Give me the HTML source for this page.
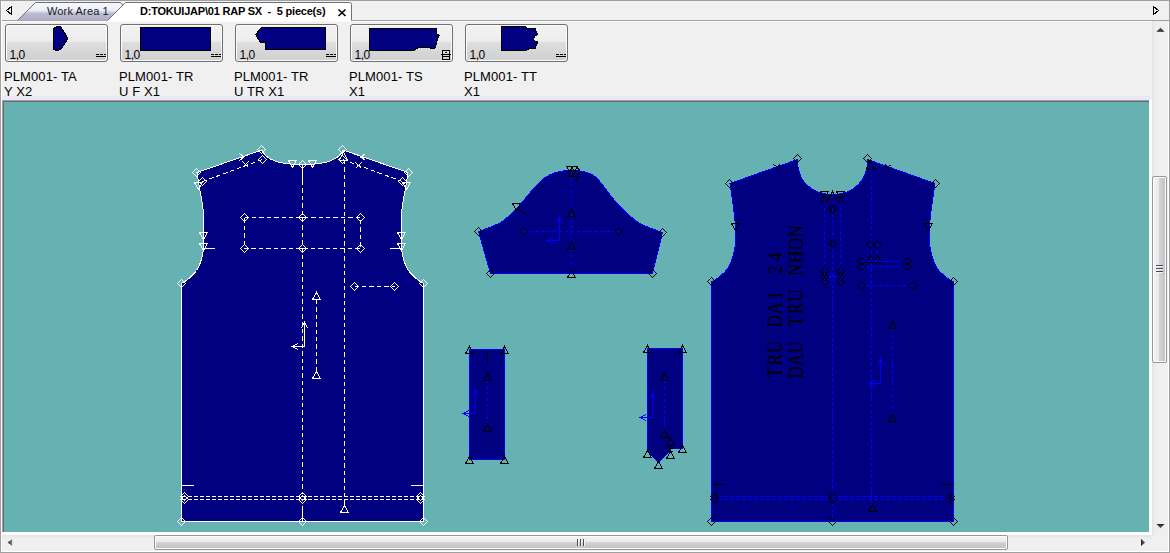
<!DOCTYPE html>
<html>
<head>
<meta charset="utf-8">
<title>Work Area</title>
<style>
html,body{margin:0;padding:0;}
body{width:1170px;height:553px;position:relative;overflow:hidden;background:#f0f0f0;font-family:"Liberation Sans",sans-serif;color:#000;}
.abs{position:absolute;}
/* outer frame */
#frameT{left:0;top:0;width:1170px;height:1px;background:#a0a0a0;}
#frameL{left:0;top:0;width:1px;height:553px;background:#a0a0a0;}
#frameL2{left:1px;top:1px;width:1px;height:551px;background:#fff;}
#frameR{left:1169px;top:0;width:1px;height:553px;background:#a0a0a0;}
#frameR2{left:1168px;top:21px;width:1px;height:531px;background:#fff;}
#frameB{left:0;top:552px;width:1170px;height:1px;background:#a0a0a0;}
#frameB2{left:1px;top:551px;width:1168px;height:1px;background:#fff;}
/* tab strip */
#tabline{left:1px;top:20px;width:1168px;height:1px;background:#a0a0a0;}
#tabline2{left:2px;top:21px;width:1166px;height:1px;background:#fafafa;}
.tabtxt{position:absolute;font-size:11px;line-height:13px;white-space:nowrap;}
#t1{left:47px;top:5px;color:#1a1a1a;letter-spacing:0.14px;}
#t2{left:140px;top:5px;font-weight:bold;letter-spacing:-0.21px;}
/* piece buttons */
.btn{position:absolute;top:24px;width:101px;height:36px;border:1px solid #707070;border-radius:3px;
 background:linear-gradient(#f3f3f3 0%,#ececec 47%,#dedede 48%,#cfcfcf 100%);box-shadow:inset 0 0 0 1px #fbfbfb;}
.scale{position:absolute;font-size:12px;line-height:12px;top:49px;letter-spacing:-0.5px;margin-left:0.5px;}
.lbl{position:absolute;top:69px;letter-spacing:0.1px;font-size:13px;line-height:15px;white-space:pre;}
/* canvas */
#lav{left:2px;top:96px;width:1149px;height:4px;background:#e9e9f8;}
#cvT1{left:2px;top:100px;width:1147px;height:1px;background:#a0a0a0;}
#cvT2{left:3px;top:101px;width:1146px;height:1px;background:#696969;}
#cvL1{left:2px;top:100px;width:1px;height:432px;background:#a0a0a0;}
#cvL2{left:3px;top:101px;width:1px;height:431px;background:#696969;}
#canvas{left:4px;top:102px;width:1145px;height:430px;background:#66b2b2;}
#cvR{left:1149px;top:100px;width:3px;height:435px;background:#fff;}
#cvB{left:2px;top:532px;width:1149px;height:3px;background:#fff;}
/* scrollbars */
#vsb{left:1152px;top:21px;width:16px;height:514px;background:linear-gradient(90deg,#e3e3e3 0,#ededed 3px,#f0f0f0 9px,#f0f0f0 100%);}
#vth{left:1152px;top:176px;width:13px;height:185px;border:1px solid #979797;border-radius:2px;
 background:linear-gradient(90deg,#f5f5f5 0%,#e9e9eb 47%,#d5d5d8 48%,#bfbfc4 100%);box-shadow:inset 0 0 0 1px #fcfcfc;}
#hsb{left:2px;top:535px;width:1149px;height:16px;background:linear-gradient(#e3e3e3 0,#ededed 3px,#f0f0f0 9px,#f0f0f0 100%);}
#hth{left:154px;top:535px;width:852px;height:13px;border:1px solid #979797;border-radius:2px;
 background:linear-gradient(#f5f5f5 0%,#e9e9eb 47%,#d5d5d8 48%,#bfbfc4 100%);box-shadow:inset 0 0 0 1px #fcfcfc;}
svg{position:absolute;left:0;top:0;}
</style>
</head>
<body>
<div class="abs" id="tabline"></div>
<div class="abs" id="tabline2"></div>

<!-- tab strip graphics -->
<svg width="1170" height="24" viewBox="0 0 1170 24">
 <defs>
  <linearGradient id="tabg" x1="0" y1="0" x2="0" y2="1">
   <stop offset="0" stop-color="#f6f7fd"/><stop offset="0.42" stop-color="#eef0fa"/>
   <stop offset="0.62" stop-color="#b9bbd2"/><stop offset="1" stop-color="#adadc6"/>
  </linearGradient>
 </defs>
 <!-- inactive tab -->
 <path d="M17.5 20.5 L35.5 2.5 L120.5 2.5 L123 5.5 L107.5 20.5 Z" fill="url(#tabg)" stroke="none"/>
 <path d="M17.5 20.5 L35.5 2.5 L120.5 2.5 L123 5.5" fill="none" stroke="#707070" stroke-width="1"/>
 <!-- active tab -->
 <path d="M107 21 L125.5 2.5 L349.5 2.5 Q351.5 2.5 351.5 4.5 L351.5 21 Z" fill="#ffffff" stroke="none"/>
 <path d="M107.5 20.5 L125.5 2.5 L349.5 2.5 Q351.5 2.5 351.5 4.5 L351.5 20.5" fill="none" stroke="#707070" stroke-width="1"/>
 <!-- left / right scroll arrows -->
 <path d="M11.5 6.5 L6.5 10.5 L11.5 14.5 Z" fill="none" stroke="#000" stroke-width="1" shape-rendering="crispEdges"/>
 <path d="M1153.5 6.5 L1158.5 10.5 L1153.5 14.5 Z" fill="none" stroke="#000" stroke-width="1" shape-rendering="crispEdges"/>
 <!-- close x -->
 <path d="M338.5 9.5 L345.5 16 M345.5 9.5 L338.5 16" fill="none" stroke="#000" stroke-width="1.6"/>
</svg>
<div class="tabtxt" id="t1">Work Area 1</div>
<div class="tabtxt" id="t2">D:TOKUIJAP\01 RAP SX&nbsp; -&nbsp; 5 piece(s)</div>

<!-- piece buttons -->
<div class="btn" style="left:5px"></div>
<div class="btn" style="left:120px"></div>
<div class="btn" style="left:235px"></div>
<div class="btn" style="left:350px"></div>
<div class="btn" style="left:465px"></div>
<div class="scale" style="left:9px">1,0</div>
<div class="scale" style="left:124px">1,0</div>
<div class="scale" style="left:239px">1,0</div>
<div class="scale" style="left:354px">1,0</div>
<div class="scale" style="left:469px">1,0</div>
<div class="lbl" style="left:4px">PLM001- TA
Y X2</div>
<div class="lbl" style="left:119px">PLM001- TR
U F X1</div>
<div class="lbl" style="left:234px">PLM001- TR
U TR X1</div>
<div class="lbl" style="left:349px">PLM001- TS
X1</div>
<div class="lbl" style="left:464px">PLM001- TT
X1</div>

<!-- canvas -->
<div class="abs" id="lav"></div>
<div class="abs" id="cvR"></div>
<div class="abs" id="cvB"></div>
<div class="abs" id="canvas"></div>
<div class="abs" id="cvT1"></div>
<div class="abs" id="cvT2"></div>
<div class="abs" id="cvL1"></div>
<div class="abs" id="cvL2"></div>

<!-- scrollbars -->
<div class="abs" id="vsb"></div>
<div class="abs" id="vth"></div>
<div class="abs" id="hsb"></div>
<div class="abs" id="hth"></div>

<!-- frame -->
<div class="abs" id="frameT"></div>
<div class="abs" id="frameL"></div>
<div class="abs" id="frameL2"></div>
<div class="abs" id="frameR"></div>
<div class="abs" id="frameR2"></div>
<div class="abs" id="frameB2"></div>
<div class="abs" id="frameB"></div>

<!-- thumbnails, button glyphs, scrollbar glyphs -->
<svg width="1170" height="553" viewBox="0 0 1170 553" shape-rendering="crispEdges" fill="none" stroke-width="1">
 <g fill="#000080" stroke="#000">
  <path d="M53.5 28.5L57.5 26.5L60.5 26.5L67.5 37.5L67.5 39.5L60.5 49.5L57.5 50.5L53.5 49.5Z"/>
  <path d="M140.5 27.5L210.5 27.5L210.5 50.5L140.5 50.5Z"/>
  <path d="M261.5 27.5L325.5 27.5L325.5 49.5L265.5 49.5L265.5 42.5L260.5 42.5L255.5 34.5Z"/>
  <path d="M369.5 28.5L436.5 28.5L436.5 33.5L439.5 35.5L437.5 38.5L435.5 47.5L433.5 48.5L427.5 47.5L420.5 47.5L415.5 48.5L414.5 50.5L369.5 50.5Z"/>
  <path d="M501.5 26.5L525.5 26.5L526.5 28.5L535.5 28.5L535.5 30.5L536.5 31.5L537.5 34.5L534.5 36.5L533.5 38.5L534.5 41.5L537.5 41.5L536.5 45.5L535.5 45.5L535.5 48.5L529.5 48.5L525.5 50.5L501.5 50.5Z"/>
 </g>
 <g stroke="#000">
  <!-- "=" style glyphs -->
  <path d="M96 54.5L106 54.5" stroke-dasharray="3 1"/><path d="M96 56.5L106 56.5"/>
  <path d="M211 54.5L221 54.5" stroke-dasharray="3 1"/><path d="M211 56.5L221 56.5"/>
  <path d="M326 54.5L336 54.5" stroke-dasharray="3 1"/><path d="M326 56.5L336 56.5"/>
  <path d="M556 54.5L566 54.5" stroke-dasharray="3 1"/><path d="M556 56.5L566 56.5"/>
  <!-- box glyph on 4th button -->
  <path d="M442.5 50.5L449.5 50.5L449.5 59.5L442.5 59.5Z"/>
  <path d="M441 54.5L451 54.5M443 56.5L449 56.5M445 52.5L447 52.5"/>
 </g>
 <!-- vertical scrollbar arrows -->
 <defs>
  <linearGradient id="agv" x1="0" y1="0" x2="0" y2="1"><stop offset="0" stop-color="#1c1c1c"/><stop offset="1" stop-color="#7a7a7a"/></linearGradient>
  <linearGradient id="agu" x1="0" y1="1" x2="0" y2="0"><stop offset="0" stop-color="#1c1c1c"/><stop offset="1" stop-color="#7a7a7a"/></linearGradient>
  <linearGradient id="agh" x1="0" y1="0" x2="1" y2="0"><stop offset="0" stop-color="#1c1c1c"/><stop offset="1" stop-color="#7a7a7a"/></linearGradient>
  <linearGradient id="agl" x1="0" y1="0" x2="1" y2="0"><stop offset="0" stop-color="#1c1c1c"/><stop offset="1" stop-color="#8a8a8a"/></linearGradient>
 </defs>
 <g stroke="none" shape-rendering="auto">
  <path d="M1156.5 31.7L1160.5 27.5L1164.5 31.7Z" fill="url(#agu)"/>
  <path d="M1156.5 524L1160.5 528.3L1164.5 524Z" fill="url(#agv)"/>
  <path d="M1141 539L1145.3 542.5L1141 546Z" fill="url(#agh)"/>
  <path d="M12.2 539L7.7 542.5L12.2 546Z" fill="url(#agl)"/>
 </g>
 <!-- grips -->
 <g>
  <path d="M1156 265.5L1163 265.5M1156 268.5L1163 268.5M1156 271.5L1163 271.5" stroke="#4b4b52"/>
  <path d="M1156 266.5L1163 266.5M1156 269.5L1163 269.5M1156 272.5L1163 272.5" stroke="#f4f4f6"/>
  <path d="M577.5 539L577.5 546M580.5 539L580.5 546M583.5 539L583.5 546" stroke="#4b4b52"/>
  <path d="M578.5 539L578.5 546M581.5 539L581.5 546M584.5 539L584.5 546" stroke="#f4f4f6"/>
 </g>
</svg>
<!--PIECES_START-->
<svg width="1170" height="553" viewBox="0 0 1170 553" shape-rendering="crispEdges" fill="none" stroke-width="1">
<g>
<path d="M181.5 521.5 L181.5 283.5 C187.5 280 193 275.5 196.5 270.5 C200 265 202.5 257.5 203.5 248.5 L203.5 214.5 C203 205 201 196 199.5 188 C198.5 182 197.5 177 197 172.5 L262 150 C263.5 153.5 267 157.5 271.5 159.5 C277 162.5 285 164.5 302.5 164.5 C320 164.5 328 162.5 333.5 159.5 C338 157.5 341.5 153.5 343 150 L408 172.5 C407.5 177 406.5 182 405.5 188 C404 196 402 205 401.5 214.5 L401.5 248.5 C402.5 257.5 405 265 408.5 270.5 C412 275.5 417.5 280 423.5 283.5 L423.5 521.5 Z" stroke="#ffffff" fill="#000080"/>
<path d="M177.5 283.5L181.5 279.5L185.5 283.5L181.5 287.5Z" stroke="#ffffff"/>
<path d="M192.5 172.5L196.5 168.5L200.5 172.5L196.5 176.5Z" stroke="#ffffff"/>
<path d="M257.5 149.5L261.5 145.5L265.5 149.5L261.5 153.5Z" stroke="#ffffff"/>
<path d="M338.5 149.5L342.5 145.5L346.5 149.5L342.5 153.5Z" stroke="#ffffff"/>
<path d="M404.5 172.5L408.5 168.5L412.5 172.5L408.5 176.5Z" stroke="#ffffff"/>
<path d="M419.5 283.5L423.5 279.5L427.5 283.5L423.5 287.5Z" stroke="#ffffff"/>
<path d="M177.5 521.5L181.5 517.5L185.5 521.5L181.5 525.5Z" stroke="#ffffff"/>
<path d="M298.5 521.5L302.5 517.5L306.5 521.5L302.5 525.5Z" stroke="#ffffff"/>
<path d="M419.5 521.5L423.5 517.5L427.5 521.5L423.5 525.5Z" stroke="#ffffff"/>
<path d="M298.5 164.5L302.5 160.5L306.5 164.5L302.5 168.5Z" stroke="#ffffff"/>
<path d="M239.5 153.5L244.5 157.5M239.5 160.5L244.5 156.5" stroke="#ffffff" fill="none"/>
<path d="M365.5 153.5L360.5 157.5M365.5 160.5L360.5 156.5" stroke="#ffffff" fill="none"/>
<path d="M202.5 181.5L262.5 159.5" stroke="#ffffff" fill="none" stroke-dasharray="4.4 3"/>
<path d="M402.5 181.5L342.5 159.5" stroke="#ffffff" fill="none" stroke-dasharray="4.4 3"/>
<path d="M242.5 161.5L248.5 167.5M248.5 161.5L242.5 167.5" stroke="#ffffff" fill="none"/>
<path d="M355.5 162.5L361.5 168.5M361.5 162.5L355.5 168.5" stroke="#ffffff" fill="none"/>
<path d="M198.5 181.5L202.5 177.5L206.5 181.5L202.5 185.5Z" stroke="#ffffff"/>
<path d="M258.5 159.5L262.5 155.5L266.5 159.5L262.5 163.5Z" stroke="#ffffff"/>
<path d="M398.5 181.5L402.5 177.5L406.5 181.5L402.5 185.5Z" stroke="#ffffff"/>
<path d="M338.5 159.5L342.5 155.5L346.5 159.5L342.5 163.5Z" stroke="#ffffff"/>
<path d="M194.5 182.5L198.5 189.5L202.5 182.5Z" stroke="#ffffff"/>
<path d="M402.5 182.5L406.5 189.5L410.5 182.5Z" stroke="#ffffff"/>
<path d="M339.5 160.5L343.5 151.5L347.5 160.5Z" stroke="#ffffff"/>
<path d="M288.5 160.5L292.5 167.5L296.5 160.5Z" stroke="#ffffff"/>
<path d="M308.5 160.5L312.5 167.5L316.5 160.5Z" stroke="#ffffff"/>
<path d="M199.5 232.5L203.5 239.5L207.5 232.5Z" stroke="#ffffff"/>
<path d="M397.5 232.5L401.5 239.5L405.5 232.5Z" stroke="#ffffff"/>
<path d="M199.5 243.5L203.5 250.5L207.5 243.5Z" stroke="#ffffff"/>
<path d="M397.5 243.5L401.5 250.5L405.5 243.5Z" stroke="#ffffff"/>
<path d="M203 248.5L215 248.5" stroke="#ffffff"/>
<path d="M390 248.5L402 248.5" stroke="#ffffff"/>
<path d="M302.5 164.5L302.5 181" stroke="#ffffff"/>
<path d="M302.5 181L302.5 494" stroke="#ffffff" stroke-dasharray="4.4 3"/>
<path d="M302.5 506L302.5 521.5" stroke="#ffffff"/>
<path d="M344.5 160L344.5 505" stroke="#ffffff" stroke-dasharray="4.4 3"/>
<path d="M244.5 217.5L360.5 217.5L360.5 248.5L244.5 248.5Z" stroke="#ffffff" fill="none" stroke-dasharray="4.4 3"/>
<path d="M240.5 217.5L244.5 213.5L248.5 217.5L244.5 221.5Z" stroke="#ffffff"/>
<path d="M298.5 217.5L302.5 213.5L306.5 217.5L302.5 221.5Z" stroke="#ffffff"/>
<path d="M356.5 217.5L360.5 213.5L364.5 217.5L360.5 221.5Z" stroke="#ffffff"/>
<path d="M240.5 248.5L244.5 244.5L248.5 248.5L244.5 252.5Z" stroke="#ffffff"/>
<path d="M298.5 248.5L302.5 244.5L306.5 248.5L302.5 252.5Z" stroke="#ffffff"/>
<path d="M356.5 248.5L360.5 244.5L364.5 248.5L360.5 252.5Z" stroke="#ffffff"/>
<path d="M299 217.5L306 217.5" stroke="#ffffff"/>
<path d="M299 248.5L306 248.5" stroke="#ffffff"/>
<path d="M354.5 286.5L394.5 286.5" stroke="#ffffff" stroke-dasharray="4.4 3"/>
<path d="M350.5 286.5L354.5 282.5L358.5 286.5L354.5 290.5Z" stroke="#ffffff"/>
<path d="M390.5 286.5L394.5 282.5L398.5 286.5L394.5 290.5Z" stroke="#ffffff"/>
<path d="M316.5 300L316.5 371" stroke="#ffffff" stroke-dasharray="4.4 3"/>
<path d="M312.5 299.5L316.5 292.5L320.5 299.5Z" stroke="#ffffff"/>
<path d="M312.5 378.5L316.5 371.5L320.5 378.5Z" stroke="#ffffff"/>
<path d="M304.5 322.5L304.5 346.5L292.5 346.5" stroke="#ffffff" fill="none"/>
<path d="M301.5 328L304.5 322.5L307.5 328" stroke="#ffffff" fill="none"/>
<path d="M298 343.5L292.5 346.5L298 349.5" stroke="#ffffff" fill="none"/>
<path d="M181.5 485.5L194 485.5" stroke="#ffffff"/>
<path d="M411 485.5L423.5 485.5" stroke="#ffffff"/>
<path d="M181.5 496.5L423.5 496.5" stroke="#ffffff" stroke-dasharray="4 2"/>
<path d="M181.5 499.5L423.5 499.5" stroke="#ffffff" stroke-dasharray="4 2"/>
<path d="M180.5 496.5L184.5 492.5L188.5 496.5L184.5 500.5Z" stroke="#ffffff"/>
<path d="M180.5 499.5L184.5 495.5L188.5 499.5L184.5 503.5Z" stroke="#ffffff"/>
<path d="M298.5 496.5L302.5 492.5L306.5 496.5L302.5 500.5Z" stroke="#ffffff"/>
<path d="M298.5 499.5L302.5 495.5L306.5 499.5L302.5 503.5Z" stroke="#ffffff"/>
<path d="M416.5 496.5L420.5 492.5L424.5 496.5L420.5 500.5Z" stroke="#ffffff"/>
<path d="M416.5 499.5L420.5 495.5L424.5 499.5L420.5 503.5Z" stroke="#ffffff"/>
<path d="M340.5 512.5L344.5 505.5L348.5 512.5Z" stroke="#ffffff"/>
<path d="M478.5 231.5 L490.5 273.5 L652.5 273.5 L662.5 232.5 C653 229 646 227 640 223.5 C631 218 625 212 618 204.5 C610 196 604 186 596.5 177.5 C590 172 581 170.5 571.5 170.5 C562 170.5 553 172 545 177.5 C538 183 533 189 528.5 194.5 C522 203 514 213 501.5 222 C495 226 487 228.5 478.5 231.5 Z" stroke="#0000ff" fill="#000080"/>
<path d="M571.5 172L571.5 273" stroke="#0000ff" stroke-dasharray="3.4 2.5"/>
<path d="M523.5 231.5L618.5 231.5" stroke="#0000ff" stroke-dasharray="3.4 2.5"/>
<path d="M474.5 231.5L478.5 227.5L482.5 231.5L478.5 235.5Z" stroke="#000000"/>
<path d="M486.5 273.5L490.5 269.5L494.5 273.5L490.5 277.5Z" stroke="#000000"/>
<path d="M648.5 273.5L652.5 269.5L656.5 273.5L652.5 277.5Z" stroke="#000000"/>
<path d="M658.5 232.5L662.5 228.5L666.5 232.5L662.5 236.5Z" stroke="#000000"/>
<path d="M519.5 231.5L523.5 227.5L527.5 231.5L523.5 235.5Z" stroke="#000000"/>
<path d="M614.5 231.5L618.5 227.5L622.5 231.5L618.5 235.5Z" stroke="#000000"/>
<path d="M567.5 216.5L571.5 209.5L575.5 216.5Z" stroke="#000000"/>
<path d="M567.5 249.5L571.5 242.5L575.5 249.5Z" stroke="#000000"/>
<path d="M567.5 277.5L571.5 270.5L575.5 277.5Z" stroke="#000000"/>
<path d="M559.5 217.5L559.5 240.5L547.5 240.5" stroke="#0000ff" fill="none"/>
<path d="M556.5 223L559.5 217.5L562.5 223" stroke="#0000ff" fill="none"/>
<path d="M553 237.5L547.5 240.5L553 243.5" stroke="#0000ff" fill="none"/>
<path d="M512.5 203.5L516.5 210.5L520.5 203.5Z" stroke="#000000"/>
<path d="M517.5 208.5L526.5 214.5" stroke="#000000"/>
<path d="M566.5 166.5L569.5 171.5L572.5 166.5Z" stroke="#000000"/>
<path d="M571.5 166.5L574.5 171.5L577.5 166.5Z" stroke="#000000"/>
<path d="M568.5 176.5L571.5 171.5L574.5 176.5Z" stroke="#000000"/>
<path d="M576.5 166.5L580.5 171.5L577.5 175.5L576.5 182.5" stroke="#000000" fill="none"/>
<path d="M568.5 172.5L571.5 169.5L574.5 172.5L571.5 175.5Z" stroke="#000000"/>
<path d="M469.5 349.5L504.5 349.5L504.5 459.5L469.5 459.5Z" stroke="#0000ff" fill="#000080"/>
<path d="M465.5 353.5L469.5 346.5L473.5 353.5Z" stroke="#000000"/>
<path d="M500.5 353.5L504.5 346.5L508.5 353.5Z" stroke="#000000"/>
<path d="M465.5 463.5L469.5 456.5L473.5 463.5Z" stroke="#000000"/>
<path d="M500.5 463.5L504.5 456.5L508.5 463.5Z" stroke="#000000"/>
<path d="M487.5 351.5L487.5 362.5" stroke="#000000"/>
<path d="M487.5 380L487.5 424" stroke="#0000ff" stroke-dasharray="3.4 2.5"/>
<path d="M483.5 380.5L487.5 373.5L491.5 380.5Z" stroke="#000000"/>
<path d="M483.5 431.5L487.5 424.5L491.5 431.5Z" stroke="#000000"/>
<path d="M475.5 390.5L475.5 413.5L463.5 413.5" stroke="#0000ff" fill="none"/>
<path d="M472.5 396L475.5 390.5L478.5 396" stroke="#0000ff" fill="none"/>
<path d="M469 410.5L463.5 413.5L469 416.5" stroke="#0000ff" fill="none"/>
<path d="M647.5 348.5L682.5 348.5L682.5 448.5L670.5 448.5L670.5 450.5L658.5 462.5L647.5 451.5Z" stroke="#0000ff" fill="#000080"/>
<path d="M643.5 352.5L647.5 345.5L651.5 352.5Z" stroke="#000000"/>
<path d="M678.5 352.5L682.5 345.5L686.5 352.5Z" stroke="#000000"/>
<path d="M664.5 381L664.5 431" stroke="#0000ff" stroke-dasharray="3.4 2.5"/>
<path d="M660.5 380.5L664.5 373.5L668.5 380.5Z" stroke="#000000"/>
<path d="M660.5 437.5L664.5 430.5L668.5 437.5Z" stroke="#000000"/>
<path d="M666.5 445.5L670.5 438.5L674.5 445.5Z" stroke="#000000"/>
<path d="M678.5 452.5L682.5 445.5L686.5 452.5Z" stroke="#000000"/>
<path d="M643.5 457.5L647.5 450.5L651.5 457.5Z" stroke="#000000"/>
<path d="M666.5 458.5L670.5 451.5L674.5 458.5Z" stroke="#000000"/>
<path d="M654.5 468.5L658.5 461.5L662.5 468.5Z" stroke="#000000"/>
<path d="M667.5 445.5L674.5 445.5M668.5 448.5L673.5 448.5M667.5 451.5L672.5 451.5M669.5 444.5L669.5 452.5" stroke="#000000" fill="none"/>
<path d="M652.5 393.5L652.5 417.5L640.5 417.5" stroke="#0000ff" fill="none"/>
<path d="M649.5 399L652.5 393.5L655.5 399" stroke="#0000ff" fill="none"/>
<path d="M646 414.5L640.5 417.5L646 420.5" stroke="#0000ff" fill="none"/>
<path d="M711.5 521.5 L711.5 282 C715 280 718 278.5 720.5 276 C724 273 726 271 727.5 269 C730 265 731.5 261 732.5 257.5 C734.5 251 735.5 246 735.5 241 C736 235 736 231 735.5 227 C735 219 734 211 733 204 C732 197 731 190 730 183.5 L797.5 159.5 C797.5 165 798 169 799.5 173 C801 178 803.5 181.5 806.5 184.5 C809.5 187.5 812.5 189.5 816.5 191.5 C821 193.5 826 194.5 832.5 194.5 C839 194.5 844 193.5 848.5 191.5 C852.5 189.5 855.5 187.5 858.5 184.5 C861.5 181.5 864 178 865.5 173 C867 169 867.5 165 867.5 159.5 L935 183.5 C934 190 933 197 932 204 C931 211 930 219 929.5 227 C929 231 929 235 929.5 241 C929.5 246 930.5 251 932.5 257.5 C933.5 261 935 265 937.5 269 C939 271 941 273 944.5 276 C947 278.5 950 280 953.5 282 L953.5 521.5 Z" stroke="#0000ff" fill="#000080"/>
<path d="M707.5 281.5L711.5 277.5L715.5 281.5L711.5 285.5Z" stroke="#000000"/>
<path d="M725.5 183.5L729.5 179.5L733.5 183.5L729.5 187.5Z" stroke="#000000"/>
<path d="M793.5 158.5L797.5 154.5L801.5 158.5L797.5 162.5Z" stroke="#000000"/>
<path d="M863.5 158.5L867.5 154.5L871.5 158.5L867.5 162.5Z" stroke="#000000"/>
<path d="M931.5 183.5L935.5 179.5L939.5 183.5L935.5 187.5Z" stroke="#000000"/>
<path d="M949.5 281.5L953.5 277.5L957.5 281.5L953.5 285.5Z" stroke="#000000"/>
<path d="M707.5 521.5L711.5 517.5L715.5 521.5L711.5 525.5Z" stroke="#000000"/>
<path d="M828.5 521.5L832.5 517.5L836.5 521.5L832.5 525.5Z" stroke="#000000"/>
<path d="M949.5 521.5L953.5 517.5L957.5 521.5L953.5 525.5Z" stroke="#000000"/>
<path d="M773.5 164.5L779.5 168.5M779.5 164.5L775.5 170.5" stroke="#000000" fill="none"/>
<path d="M891.5 164.5L885.5 168.5M885.5 164.5L889.5 170.5" stroke="#000000" fill="none"/>
<path d="M731.5 223.5L735.5 230.5L739.5 223.5Z" stroke="#000000"/>
<path d="M924.5 223.5L928.5 230.5L932.5 223.5Z" stroke="#000000"/>
<path d="M824.5 196L824.5 285" stroke="#0000ff" stroke-dasharray="3.4 2.5"/>
<path d="M840.5 196L840.5 285" stroke="#0000ff" stroke-dasharray="3.4 2.5"/>
<path d="M832.5 196L832.5 521" stroke="#0000ff" stroke-dasharray="3.4 2.5"/>
<path d="M871.5 162L871.5 505" stroke="#0000ff" stroke-dasharray="3.4 2.5"/>
<path d="M877.5 244L877.5 261" stroke="#0000ff" stroke-dasharray="3.4 2.5"/>
<path d="M820.5 191.5L824.5 198.5L828.5 191.5Z" stroke="#000000"/>
<path d="M836.5 191.5L840.5 198.5L844.5 191.5Z" stroke="#000000"/>
<path d="M828.5 198.5L832.5 191.5L836.5 198.5Z" stroke="#000000"/>
<path d="M820.5 199.5L824.5 195.5L828.5 199.5L824.5 203.5Z" stroke="#000000"/>
<path d="M836.5 199.5L840.5 195.5L844.5 199.5L840.5 203.5Z" stroke="#000000"/>
<path d="M828.5 208.5L832.5 204.5L836.5 208.5L832.5 212.5Z" stroke="#000000"/>
<path d="M829.5 210.5L832.5 207.5L835.5 210.5L832.5 213.5Z" stroke="#000000"/>
<path d="M828.5 243.5L832.5 239.5L836.5 243.5L832.5 247.5Z" stroke="#000000"/>
<path d="M830.5 243.5L832.5 241.5L834.5 243.5L832.5 245.5Z" stroke="#000000"/>
<path d="M820.5 271.5L824.5 267.5L828.5 271.5L824.5 275.5Z" stroke="#000000"/>
<path d="M820.5 276.5L824.5 272.5L828.5 276.5L824.5 280.5Z" stroke="#000000"/>
<path d="M820.5 281.5L824.5 277.5L828.5 281.5L824.5 285.5Z" stroke="#000000"/>
<path d="M836.5 271.5L840.5 267.5L844.5 271.5L840.5 275.5Z" stroke="#000000"/>
<path d="M836.5 276.5L840.5 272.5L844.5 276.5L840.5 280.5Z" stroke="#000000"/>
<path d="M836.5 281.5L840.5 277.5L844.5 281.5L840.5 285.5Z" stroke="#000000"/>
<path d="M830.5 272.5L830.5 280.5" stroke="#0000ff"/>
<path d="M834.5 272.5L834.5 280.5" stroke="#0000ff"/>
<path d="M828.5 276.5L836.5 276.5" stroke="#0000ff"/>
<path d="M866.5 244.5L870.5 240.5L874.5 244.5L870.5 248.5Z" stroke="#000000"/>
<path d="M873.5 244.5L877.5 240.5L881.5 244.5L877.5 248.5Z" stroke="#000000"/>
<path d="M866.5 262.5L870.5 255.5L874.5 262.5Z" stroke="#000000"/>
<path d="M873.5 262.5L877.5 255.5L881.5 262.5Z" stroke="#000000"/>
<path d="M866.5 169.5L870.5 160.5L874.5 169.5Z" stroke="#000000"/>
<path d="M861.5 261.5L907.5 261.5" stroke="#0000ff" stroke-dasharray="3.4 2.5"/>
<path d="M861.5 266.5L907.5 266.5" stroke="#0000ff" stroke-dasharray="3.4 2.5"/>
<path d="M857.5 261.5L861.5 257.5L865.5 261.5L861.5 265.5Z" stroke="#000000"/>
<path d="M857.5 266.5L861.5 262.5L865.5 266.5L861.5 270.5Z" stroke="#000000"/>
<path d="M903.5 261.5L907.5 257.5L911.5 261.5L907.5 265.5Z" stroke="#000000"/>
<path d="M903.5 266.5L907.5 262.5L911.5 266.5L907.5 270.5Z" stroke="#000000"/>
<path d="M861.5 285.5L913.5 285.5" stroke="#0000ff" stroke-dasharray="3.4 2.5"/>
<path d="M857.5 285.5L861.5 281.5L865.5 285.5L861.5 289.5Z" stroke="#000000"/>
<path d="M909.5 285.5L913.5 281.5L917.5 285.5L913.5 289.5Z" stroke="#000000"/>
<path d="M892.5 329L892.5 415" stroke="#0000ff" stroke-dasharray="3.4 2.5"/>
<path d="M888.5 328.5L892.5 321.5L896.5 328.5Z" stroke="#000000"/>
<path d="M888.5 421.5L892.5 414.5L896.5 421.5Z" stroke="#000000"/>
<path d="M880.5 359.5L880.5 383.5L869.5 383.5" stroke="#0000ff" fill="none"/>
<path d="M877.5 365L880.5 359.5L883.5 365" stroke="#0000ff" fill="none"/>
<path d="M875 380.5L869.5 383.5L875 386.5" stroke="#0000ff" fill="none"/>
<path d="M711.5 484.5L724 484.5" stroke="#000000"/>
<path d="M941 484.5L953.5 484.5" stroke="#000000"/>
<path d="M711.5 496.5L953.5 496.5" stroke="#0000ff" stroke-dasharray="4 2"/>
<path d="M711.5 499.5L953.5 499.5" stroke="#0000ff" stroke-dasharray="4 2"/>
<path d="M710.5 496.5L714.5 492.5L718.5 496.5L714.5 500.5Z" stroke="#000000"/>
<path d="M710.5 499.5L714.5 495.5L718.5 499.5L714.5 503.5Z" stroke="#000000"/>
<path d="M828.5 496.5L832.5 492.5L836.5 496.5L832.5 500.5Z" stroke="#000000"/>
<path d="M828.5 499.5L832.5 495.5L836.5 499.5L832.5 503.5Z" stroke="#000000"/>
<path d="M946.5 496.5L950.5 492.5L954.5 496.5L950.5 500.5Z" stroke="#000000"/>
<path d="M946.5 499.5L950.5 495.5L954.5 499.5L950.5 503.5Z" stroke="#000000"/>
<path d="M868.5 511.5L872.5 504.5L876.5 511.5Z" stroke="#000000"/>
</g>
<g font-family="'Liberation Serif','DejaVu Serif',serif" font-size="22" fill="#000" stroke="#000" stroke-width="0.15" shape-rendering="auto" text-anchor="middle">
<text transform="translate(782,379) rotate(-90) scale(0.76,1)" x="8.45 25.36 42.27 59.18 76.09 92.99 109.9 126.81 143.72 160.62">TRU DAI 24</text>
<text transform="translate(803,379) rotate(-90) scale(0.76,1)" x="8.45 25.36 42.27 59.18 76.09 92.99 109.9 126.81 143.72 160.62 177.53 194.44">DAU TRU NHON</text>
</g>
</svg>
<!--PIECES_END-->
</body>
</html>
